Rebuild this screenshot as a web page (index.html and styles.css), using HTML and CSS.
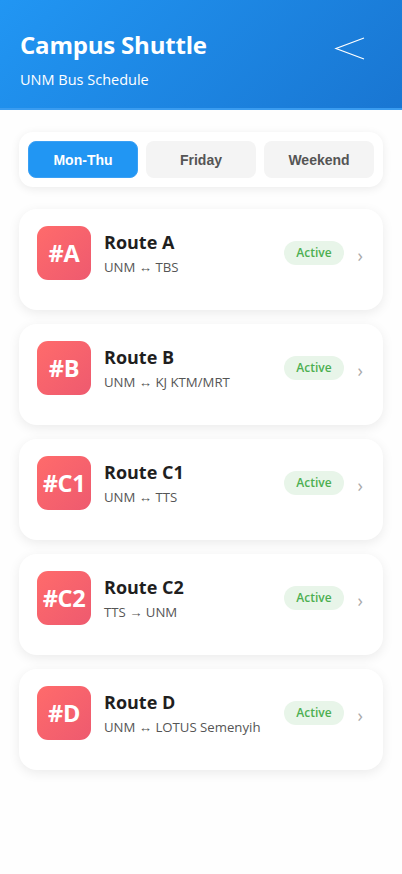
FILE: index.html
```html
<!DOCTYPE html>
<html>
<head>
<meta charset="utf-8">
<link rel="stylesheet" href="styles.css">
</head>
<body>
<header class="header">
  <div class="header-text">
    <h1 class="title">Campus Shuttle</h1>
    <p class="subtitle">UNM Bus Schedule</p>
  </div>
  <svg class="back" width="32" height="24" viewBox="0 0 32 24"><polyline points="30,2 2,12.5 30,23" fill="none" stroke="#fff" stroke-width="1.2"/></svg>
</header>
<main class="content">
  <div class="tabs">
    <button class="tab active">Mon-Thu</button>
    <button class="tab">Friday</button>
    <button class="tab">Weekend</button>
  </div>
  <div class="routes">
    <div class="card">
      <div class="badge-icon">#A</div>
      <div class="info"><div class="name">Route A</div><div class="path">UNM ↔ TBS</div></div>
      <span class="status">Active</span><span class="chev">›</span>
    </div>
    <div class="card">
      <div class="badge-icon">#B</div>
      <div class="info"><div class="name">Route B</div><div class="path">UNM ↔ KJ KTM/MRT</div></div>
      <span class="status">Active</span><span class="chev">›</span>
    </div>
    <div class="card">
      <div class="badge-icon">#C1</div>
      <div class="info"><div class="name">Route C1</div><div class="path">UNM ↔ TTS</div></div>
      <span class="status">Active</span><span class="chev">›</span>
    </div>
    <div class="card">
      <div class="badge-icon">#C2</div>
      <div class="info"><div class="name">Route C2</div><div class="path">TTS → UNM</div></div>
      <span class="status">Active</span><span class="chev">›</span>
    </div>
    <div class="card">
      <div class="badge-icon">#D</div>
      <div class="info"><div class="name">Route D</div><div class="path">UNM ↔ LOTUS Semenyih</div></div>
      <span class="status">Active</span><span class="chev">›</span>
    </div>
  </div>
</main>
</body>
</html>
```
FILE: styles.css
```css
* { box-sizing: border-box; }
html, body { margin: 0; padding: 0; background: #fefefe; }
body { font-family: "Open Sans", "Noto Sans", sans-serif; color: #222; }

.header {
  height: 110px;
  background: linear-gradient(135deg, #2196F3 0%, #1976D2 100%);
  border-bottom: 2px solid #3a9cf0;
  display: flex;
  justify-content: space-between;
  align-items: flex-start;
  padding: 30px 36px 0 20px;
  color: #fff;
}
.title { margin: 0; font-size: 24px; font-weight: 700; line-height: 30px; letter-spacing: -0.2px; }
.subtitle { margin: 10px 0 0; font-size: 14.5px; line-height: 20px; }
.back { margin-top: 6px; }

.content { padding: 22px 19px; }

.tabs {
  display: flex;
  gap: 8px;
  padding: 9px;
  background: #fff;
  border-radius: 14px;
  box-shadow: 0 2px 10px rgba(0,0,0,0.08);
}
.tab {
  flex: 1;
  height: 37px;
  border: 1px solid transparent;
  border-radius: 8px;
  background: #f4f4f4;
  color: #555;
  font-family: "Liberation Sans", Arial, sans-serif;
  font-weight: 700;
  font-size: 14px;
}
.tab.active { background: #2196F3; color: #fff; border-color: #3aa0f5; }

.routes { display: flex; flex-direction: column; gap: 14px; margin-top: 22px; }

.card {
  display: flex;
  align-items: center;
  height: 101px;
  padding: 0 20px 13px 18px;
  background: #fff;
  border-radius: 18px;
  box-shadow: 0 3px 12px rgba(0,0,0,0.08);
}
.badge-icon {
  width: 54px; height: 54px;
  border-radius: 11px;
  background: linear-gradient(135deg, #ff6b6b 0%, #ee5a6f 100%);
  color: #fff;
  font-weight: 700;
  font-size: 23.5px;
  display: flex; align-items: center; justify-content: center;
  letter-spacing: -0.3px;
  flex-shrink: 0;
}
.info { flex: 1; margin-left: 13px; }
.name { font-size: 18px; font-weight: 700; line-height: 24px; color: #1f1f1f; }
.path { font-size: 13.2px; line-height: 18px; margin-top: 4px; color: #555; }
.status {
  background: #e8f5e9;
  color: #4CAF50;
  font-size: 12px;
  font-weight: 600;
  padding: 0 12px;
  height: 24px;
  line-height: 24px;
  border-radius: 12px;
}
.chev { color: #aaa; font-size: 18px; margin-left: 14px; line-height: 18px; margin-top: 4px; }
```
